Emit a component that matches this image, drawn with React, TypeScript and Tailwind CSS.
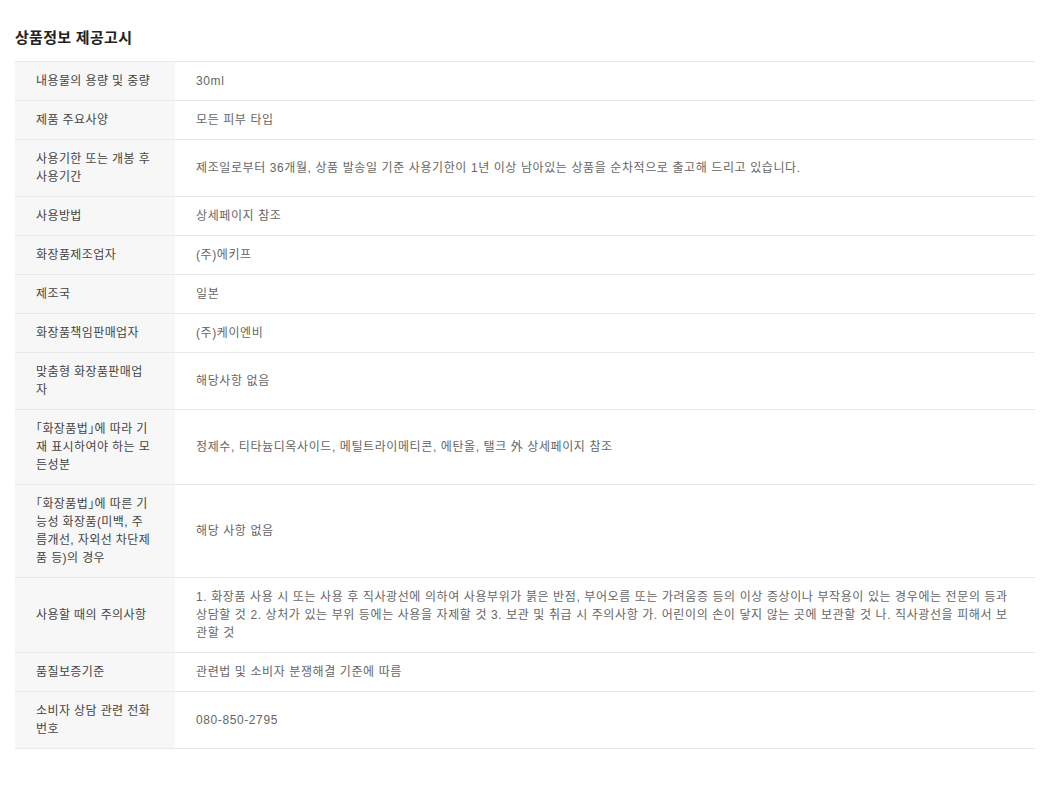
const rows: { label: string; value: string }[] = [
  { label: "내용물의 용량 및 중량", value: "30ml" },
  { label: "제품 주요사양", value: "모든 피부 타입" },
  {
    label: "사용기한 또는 개봉 후 사용기간",
    value:
      "제조일로부터 36개월, 상품 발송일 기준 사용기한이 1년 이상 남아있는 상품을 순차적으로 출고해 드리고 있습니다.",
  },
  { label: "사용방법", value: "상세페이지 참조" },
  { label: "화장품제조업자", value: "(주)에키프" },
  { label: "제조국", value: "일본" },
  { label: "화장품책임판매업자", value: "(주)케이엔비" },
  { label: "맞춤형 화장품판매업자", value: "해당사항 없음" },
  {
    label: "｢화장품법｣에 따라 기재 표시하여야 하는 모든성분",
    value: "정제수, 티타늄디옥사이드, 메틸트라이메티콘, 에탄올, 탤크 外 상세페이지 참조",
  },
  {
    label: "｢화장품법｣에 따른 기능성 화장품(미백, 주름개선, 자외선 차단제품 등)의 경우",
    value: "해당 사항 없음",
  },
  {
    label: "사용할 때의 주의사항",
    value:
      "1. 화장품 사용 시 또는 사용 후 직사광선에 의하여 사용부위가 붉은 반점, 부어오름 또는 가려움증 등의 이상 증상이나 부작용이 있는 경우에는 전문의 등과 상담할 것 2. 상처가 있는 부위 등에는 사용을 자제할 것 3. 보관 및 취급 시 주의사항 가. 어린이의 손이 닿지 않는 곳에 보관할 것 나. 직사광선을 피해서 보관할 것",
  },
  { label: "품질보증기준", value: "관련법 및 소비자 분쟁해결 기준에 따름" },
  { label: "소비자 상담 관련 전화번호", value: "080-850-2795" },
];

export default function App() {
  return (
    <div
      className="min-h-[789px] bg-white pl-[15px] pr-[21px] pt-[28px]"
      style={{ fontFamily: '"Liberation Sans", "Noto Sans CJK KR", sans-serif' }}
    >
      <h2 className="text-[15px] leading-[20px] font-bold text-[#222] tracking-[0.3px] mb-[13px]">
        상품정보 제공고시
      </h2>
      <table className="w-full border-collapse border-t border-[#e9e9e9] text-[12px] leading-[18px]">
        <tbody>
          {rows.map((row) => (
            <tr key={row.label} className="border-b border-[#e9e9e9]">
              <th className="w-[160px] bg-[#f7f7f7] pl-[21px] pr-[24px] py-[10px] text-left font-normal text-[#444] align-middle tracking-[0.4px] break-all">
                {row.label}
              </th>
              <td className="pl-[21px] pr-[20px] py-[10px] text-left text-[#666] align-middle tracking-[0.6px] break-all">
                {row.value}
              </td>
            </tr>
          ))}
        </tbody>
      </table>
    </div>
  );
}
